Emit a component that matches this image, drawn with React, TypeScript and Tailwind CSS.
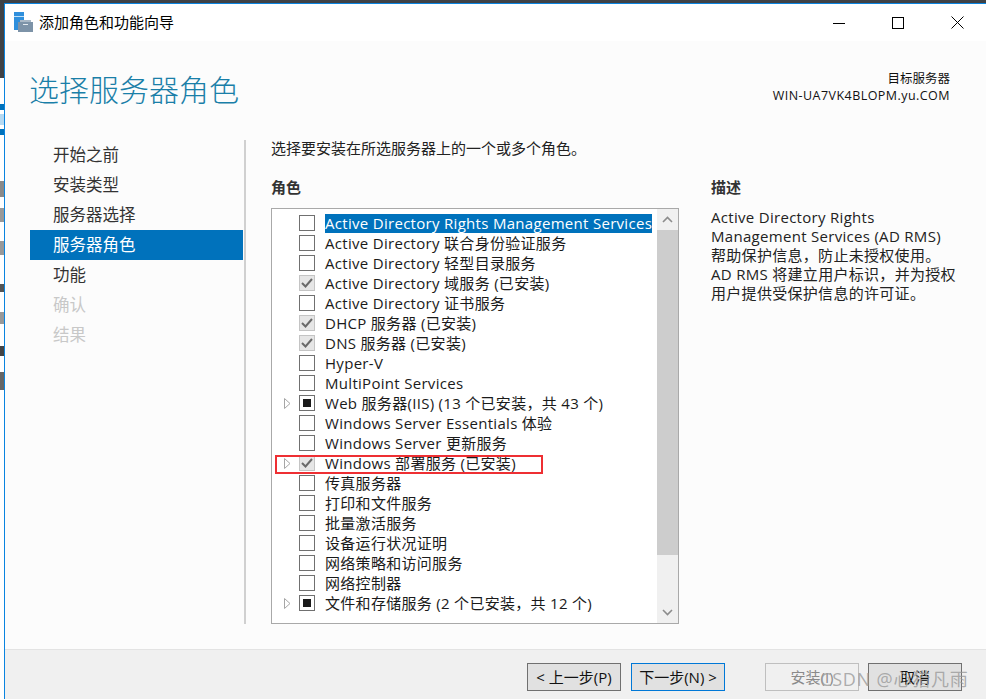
import React from 'react';

const FONT = "font-['Open_Sans','Noto_Sans_CJK_SC',sans-serif]";

const steps = [
    { label: '开始之前', state: 'normal' },
    { label: '安装类型', state: 'normal' },
    { label: '服务器选择', state: 'normal' },
    { label: '服务器角色', state: 'active' },
    { label: '功能', state: 'normal' },
    { label: '确认', state: 'disabled' },
    { label: '结果', state: 'disabled' },
];

type Mark = 'none' | 'check' | 'partial';

const roles: { label: string; mark: Mark; expand?: boolean; selected?: boolean }[] = [
    { label: 'Active Directory Rights Management Services', mark: 'none', selected: true },
    { label: 'Active Directory 联合身份验证服务', mark: 'none' },
    { label: 'Active Directory 轻型目录服务', mark: 'none' },
    { label: 'Active Directory 域服务 (已安装)', mark: 'check' },
    { label: 'Active Directory 证书服务', mark: 'none' },
    { label: 'DHCP 服务器 (已安装)', mark: 'check' },
    { label: 'DNS 服务器 (已安装)', mark: 'check' },
    { label: 'Hyper-V', mark: 'none' },
    { label: 'MultiPoint Services', mark: 'none' },
    { label: 'Web 服务器(IIS) (13 个已安装，共 43 个)', mark: 'partial', expand: true },
    { label: 'Windows Server Essentials 体验', mark: 'none' },
    { label: 'Windows Server 更新服务', mark: 'none' },
    { label: 'Windows 部署服务 (已安装)', mark: 'check', expand: true },
    { label: '传真服务器', mark: 'none' },
    { label: '打印和文件服务', mark: 'none' },
    { label: '批量激活服务', mark: 'none' },
    { label: '设备运行状况证明', mark: 'none' },
    { label: '网络策略和访问服务', mark: 'none' },
    { label: '网络控制器', mark: 'none' },
    { label: '文件和存储服务 (2 个已安装，共 12 个)', mark: 'partial', expand: true },
];

const Checkbox = ({ mark }: { mark: Mark }) => {
    if (mark === 'check') {
        return (
            <span className="flex w-[16px] h-[16px] items-center justify-center border border-[#c4c4c4] bg-[#e6e6e6]">
                <svg width="12" height="12" viewBox="0 0 12 12" fill="none">
                    <path d="M1 6 L4.5 9.5 L11 2" stroke="#6a6a6a" strokeWidth="2" />
                </svg>
            </span>
        );
    }
    return (
        <span className="flex w-[16px] h-[16px] items-center justify-center border border-[#707070] bg-white">
            {mark === 'partial' && <span className="w-[8px] h-[8px] bg-[#1a1a1a]" />}
        </span>
    );
};

const RoleRow = ({ label, mark, expand, selected }: (typeof roles)[number]) => (
    <div className="flex h-[20px] items-center">
        <span className="flex w-[27px] shrink-0 items-center justify-end pr-[8px]">
            {expand && (
                <svg width="7" height="11" viewBox="0 0 7 11" fill="none">
                    <path d="M0.5 0.5 L6 5.5 L0.5 10.5 Z" stroke="#a6a6a6" fill="#fff" />
                </svg>
            )}
        </span>
        <Checkbox mark={mark} />
        <span
            className={`ml-[10px] h-[19px] whitespace-nowrap text-[15px] leading-[19px] tracking-[0.3px] ${
                selected ? 'bg-[#0072bc] text-white' : 'text-[#1a1a1a]'
            }`}
        >
            {label}
        </span>
    </div>
);

const FooterButton = ({ label, className }: { label: string; className: string }) => (
    <button className={`h-[28px] w-[94px] border text-[15px] leading-none ${className}`}>{label}</button>
);

const App: React.FC = () => {
    return (
        <div className={`relative flex h-[699px] w-[986px] flex-col overflow-hidden bg-white ${FONT}`}>
            {/* desktop showing behind the window */}
            <div className="absolute left-0 top-0 h-[78px] w-full bg-[#3f4246]" />
            <div className="absolute left-0 top-[104px] h-[6px] w-[4px] bg-[#0072bc]" />
            <div className="absolute left-0 top-[114px] h-[11px] w-[4px] bg-[#b5d9f2]" />
            <div className="absolute left-0 top-[129px] h-[6px] w-[4px] bg-[#0072bc]" />
            <div className="absolute left-0 top-[181px] h-[16px] w-[4px] bg-[#8a8a8a]" />
            <div className="absolute left-0 top-[208px] h-[14px] w-[4px] bg-[#999999]" />
            <div className="absolute left-0 top-[241px] h-[14px] w-[4px] bg-[#999999]" />
            <div className="absolute left-0 top-[284px] h-[8px] w-[4px] bg-[#555555]" />
            <div className="absolute left-0 top-[312px] h-[12px] w-[4px] bg-[#999999]" />
            <div className="absolute left-0 top-[346px] h-[10px] w-[4px] bg-[#444444]" />
            <div className="absolute left-0 top-[372px] h-[18px] w-[4px] bg-[#666666]" />

            <div className="absolute inset-x-0 bottom-0 top-[3px] ml-[4px] flex flex-col border-l border-t border-[#0a84e0] bg-[#fcfcfc]">
                {/* title bar */}
                <div className="flex h-[37px] shrink-0 items-center bg-white">
                    <svg className="ml-[9px]" width="21" height="21" viewBox="0 0 21 21">
                        <rect x="0" y="0" width="10" height="18" fill="#2f8fdc" />
                        <rect x="0" y="4" width="10" height="1" fill="#bfe0f7" />
                        <rect x="4" y="10" width="15" height="10" fill="#7d93a8" />
                        <rect x="6" y="8" width="11" height="2" fill="#a9b8c6" />
                        <rect x="9" y="12" width="5" height="1" fill="#e4eaf0" />
                    </svg>
                    <span className="ml-[4px] text-[15px] text-black">添加角色和功能向导</span>
                    <div className="ml-auto flex items-center">
                        <svg width="12" height="12" viewBox="0 0 12 12" className="mr-[47px]">
                            <path d="M0 6.5 H12" stroke="#000" />
                        </svg>
                        <svg width="12" height="12" viewBox="0 0 12 12" className="mr-[47px]">
                            <rect x="0.5" y="0.5" width="11" height="11" fill="none" stroke="#000" />
                        </svg>
                        <svg width="13" height="13" viewBox="0 0 13 13" className="mr-[22px]">
                            <path d="M0.5 0.5 L12.5 12.5 M12.5 0.5 L0.5 12.5" stroke="#000" />
                        </svg>
                    </div>
                </div>

                {/* header */}
                <div className="flex h-[99px] shrink-0 justify-between pl-[24px] pr-[36px]">
                    <h1 className="mt-[28px] text-[30px] font-light leading-[42px] text-[#1a7fa8]">选择服务器角色</h1>
                    <div className="mt-[29px] text-right text-[12.5px] leading-[17px] text-[#111]">
                        <div>目标服务器</div>
                        <div className="tracking-[0.45px]">WIN-UA7VK4BLOPM.yu.COM</div>
                    </div>
                </div>

                {/* body */}
                <div className="flex min-h-0 flex-1 pl-[25px]">
                    <nav className="mb-[25px] w-[216px] shrink-0 border-r-2 border-[#d0d0d0] pr-[1px]">
                        {steps.map(step => (
                            <div
                                key={step.label}
                                className={`flex h-[30px] items-center pl-[23px] text-[16.5px] ${
                                    step.state === 'active'
                                        ? 'bg-[#0072bc] text-white'
                                        : step.state === 'disabled'
                                          ? 'text-[#c8c8c8]'
                                          : 'text-[#333]'
                                }`}
                            >
                                {step.label}
                            </div>
                        ))}
                    </nav>

                    <main className="ml-[25px] flex min-w-0 flex-1">
                        <div className="w-[408px] shrink-0">
                            <p className="h-[30px] text-[15px] leading-[16px] text-[#222]">选择要安装在所选服务器上的一个或多个角色。</p>
                            <h2 className="h-[30px] pt-[8px] text-[15px] font-semibold leading-[18px] text-[#333]">角色</h2>
                            <div className="relative mt-[8px] flex h-[416px] border border-[#a9a9a9] bg-white">
                                <div className="min-w-0 flex-1 pt-[4px]">
                                    {roles.map(role => (
                                        <RoleRow key={role.label} {...role} />
                                    ))}
                                </div>
                                <div className="flex w-[21px] shrink-0 flex-col bg-[#f0f0f0]">
                                    <div className="flex h-[21px] items-center justify-center">
                                        <svg width="11" height="7" viewBox="0 0 11 7" fill="none">
                                            <path d="M1 6 L5.5 1.5 L10 6" stroke="#8c8c8c" strokeWidth="1.6" />
                                        </svg>
                                    </div>
                                    <div className="h-[325px] bg-[#cdcdcd]" />
                                    <div className="flex-1" />
                                    <div className="flex h-[21px] items-center justify-center">
                                        <svg width="11" height="7" viewBox="0 0 11 7" fill="none">
                                            <path d="M1 1 L5.5 5.5 L10 1" stroke="#8c8c8c" strokeWidth="1.6" />
                                        </svg>
                                    </div>
                                </div>
                                {/* red annotation around the deployment role */}
                                <div className="absolute left-[3px] top-[246px] h-[19px] w-[268px] border-2 border-[#ee2f33]" />
                            </div>
                        </div>
                        <aside className="ml-[32px] w-[250px]">
                            <h2 className="mt-[30px] h-[30px] pt-[8px] text-[15px] font-semibold leading-[18px] text-[#333]">描述</h2>
                            <p className="mt-[8px] whitespace-nowrap text-[15px] leading-[19px] tracking-[0.3px] text-[#222]">
                                Active Directory Rights
                                <br />
                                Management Services (AD RMS)
                                <br />
                                帮助保护信息，防止未授权使用。
                                <br />
                                AD RMS 将建立用户标识，并为授权
                                <br />
                                用户提供受保护信息的许可证。
                            </p>
                        </aside>
                    </main>
                </div>

                {/* footer */}
                <div className="relative flex h-[50px] shrink-0 items-start border-t border-[#e3e3e3] bg-[#f0f0f0] pl-[522px] pt-[13px]">
                    <FooterButton label="< 上一步(P)" className="border-[#707070] bg-[#e1e1e1] text-[#111]" />
                    <FooterButton label="下一步(N) >" className="ml-[10px] border-[#0078d7] bg-[#e1e1e1] text-[#111]" />
                    <FooterButton label="安装(I)" className="ml-[40px] border-[#bfbfbf] bg-[#f0f0f0] text-[#8a8a8a]" />
                    <FooterButton label="取消" className="ml-[9px] border-[#707070] bg-[#e1e1e1] text-[#111]" />
                    <span className="absolute left-[815px] top-[17px] whitespace-nowrap text-[18px] leading-[24px] tracking-[0.8px] text-[#9a9a9a]/80">CSDN @心猎凡雨</span>
                </div>
            </div>
        </div>
    );
};

export default App;
